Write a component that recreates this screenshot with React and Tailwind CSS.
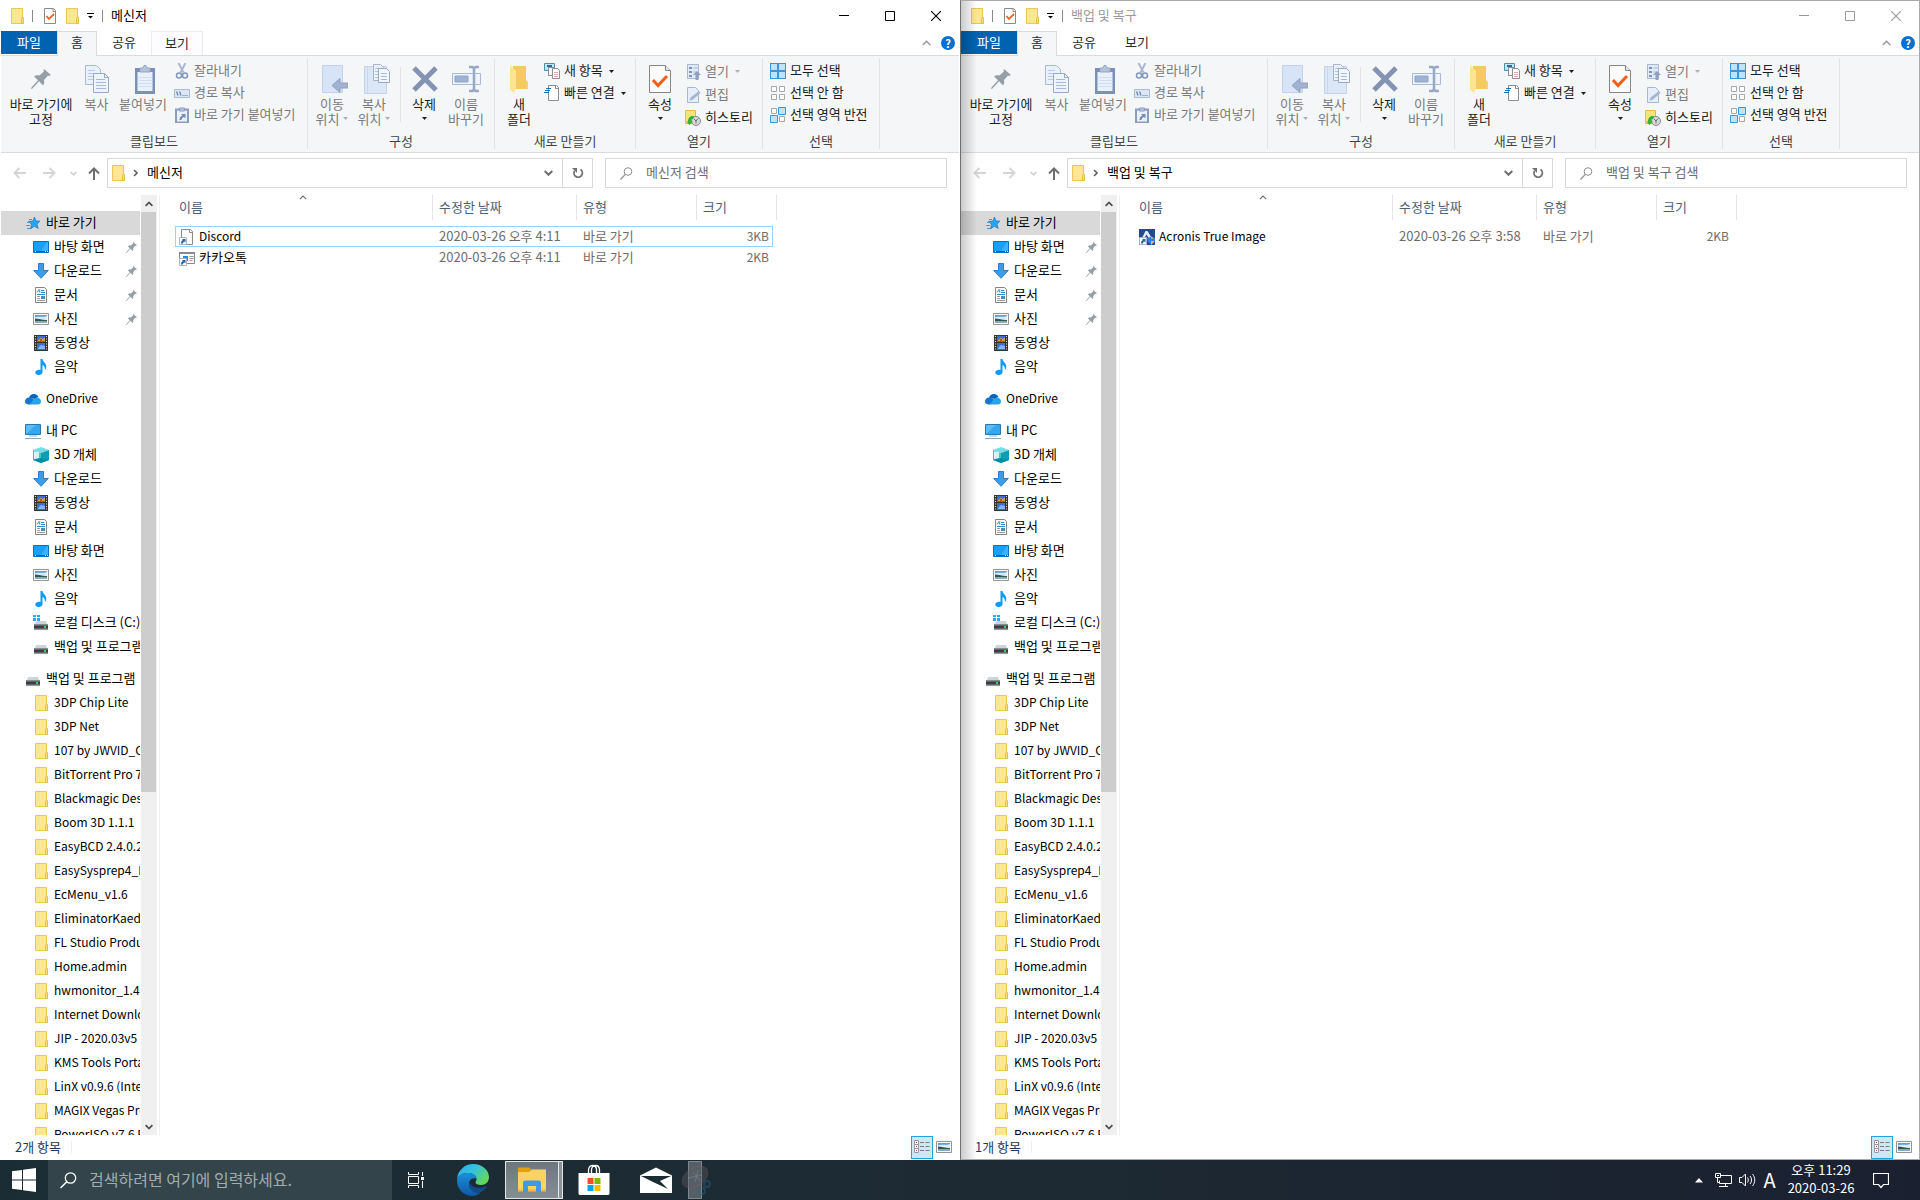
import React from "react";

/* ---------- icons ---------- */

const Svg = ({ w = 16, h = 16, className = "", children }) => (
  <svg
    width={w}
    height={h}
    viewBox={`0 0 ${w} ${h}`}
    fill="none"
    aria-hidden="true"
    className={`shrink-0 ${className}`}
  >
    {children}
  </svg>
);

const FolderIcon = ({ className }) => (
  <Svg className={className}>
    <path d="M2.5.5h11v9h1v6h-12z" fill="#ffe694" stroke="#ebc851" />
    <path d="M12.5 15.5v-5l1-1.5 1 1.5v5z" fill="#fbe08a" stroke="#e5bf44" />
  </Svg>
);

const CheckDocIcon = () => (
  <Svg>
    <path d="M2.5.5h9l2 2v13h-11z" fill="#fff" stroke="#8a8a8a" />
    <path d="M11 .5v3h3" stroke="#8a8a8a" />
    <path d="m4.5 8 2.5 3 5-5" stroke="#f0641e" strokeWidth="1.8" />
  </Svg>
);

const PinIcon = ({ size = 11 }) => (
  <svg width={size} height={size} viewBox="0 0 20 20" aria-hidden="true" className="shrink-0">
    <path
      d="M13 0l7 6-2 1-1-.4-4 4.4c.6 2 .2 4-1 5.500l-4-4.200L1.500 19.500 0 20l.4-1.500 6.600-7.200L3 7.500c1.500-1.300 3.500-1.500 5.500-1L13 2.500 12.400 1.500z"
      fill="#93a0a8"
    />
  </svg>
);

const Caret = ({ color = "#222" }) => (
  <Svg w={5} h={3}>
    <path d="M0 0h5L2.500 3z" fill={color} />
  </Svg>
);

const Chevron = ({ dir = "down", color = "#707070", w = 9, h = 6, sw = 2 }) => (
  <svg width={w} height={h} viewBox="0 0 9 6" fill="none" aria-hidden="true" className="shrink-0">
    <path d={dir === "down" ? "M.7 1l3.800 3.800L8.300 1" : "M.7 5l3.800-3.800L8.300 5"} stroke={color} strokeWidth={sw} />
  </svg>
);

const CopyIcon = () => (
  <Svg w={24} h={28}>
    <path d="M.5.500h11l4 4v15H.5z" fill="#eaf1fb" stroke="#a9b9d4" />
    <path d="M3 5.500h7M3 8.500h9M3 11.500h5M3 14.500h5" stroke="#b9c8e0" />
    <path d="M8.500 8.500h11l4 4v15h-15z" fill="#eef4fc" stroke="#97a9c8" />
    <path d="M19.500 8.500v4h4" stroke="#97a9c8" />
    <path d="M11 14.500h9M11 17.500h10M11 20.500h10M11 23.500h10" stroke="#a9b9d4" />
  </Svg>
);

const PasteIcon = () => (
  <Svg w={24} h={29}>
    <g transform="translate(4 0)">
      <path d="M0 3h20v26H0z" fill="#7b8fb8" />
      <path d="M2.500 7h15v19h-15z" fill="#e9f1fc" />
      <path d="M2.500 12.500h15M2.500 15.500h15M2.500 18.500h15M2.500 21.500h15" stroke="#d0deef" />
      <path d="M5 3h3l1-2.500h2L12 3h3v4H5z" fill="#b5c3da" stroke="#93a5c5" />
    </g>
  </Svg>
);

const ScissorsIcon = () => (
  <Svg>
    <path d="M4.500 0l5 9.500M11.500 0l-5 9.500" stroke="#a9b8d3" strokeWidth="2" />
    <circle cx="5" cy="12.500" r="2.500" stroke="#8397bd" strokeWidth="1.500" />
    <circle cx="11" cy="12.500" r="2.500" stroke="#8397bd" strokeWidth="1.500" />
  </Svg>
);

const PathIcon = () => (
  <Svg>
    <path d="M.5 4.500h15v8H.5z" fill="#dce7f6" stroke="#aabad4" />
    <path d="M2.500 6.500l1.500 4M5.500 6.500l1.500 4" stroke="#7489b3" strokeWidth="1.400" />
    <path d="M8.500 10.500h1M10.500 10.500h1M12.500 10.500h1" stroke="#5b74a5" />
  </Svg>
);

const PasteShortcutIcon = () => (
  <Svg>
    <path d="M2 2.500h12v13H2z" fill="#e9f1fc" stroke="#8a9cc0" strokeWidth="2" />
    <path d="M5.500 1h5v3h-5z" fill="#b5c3da" stroke="#8a9cc0" />
    <path d="M5.500 13c0-2.500 1-3.800 3-4.500L7 7h4.500v4.500L10 10c-1.500.5-2.500 1.500-2.500 3z" fill="#7489b3" />
  </Svg>
);

const MoveToIcon = () => (
  <Svg w={32} h={28}>
    <g transform="translate(6 0)">
      <path d="M.5.500h20v27H.5z" fill="#d7e3f6" stroke="#c3d2ea" />
      <path d="M10 20.500l8-7v4.500h8v5h-8v4.500z" fill="#a3b2d0" stroke="#8fa1c3" />
    </g>
  </Svg>
);

const CopyToIcon = () => (
  <Svg w={32} h={30}>
    <g transform="translate(6 0)">
      <path d="M.5 2.500h22v27H.5z" fill="#dbe6f6" stroke="#c3d2ea" />
      <path d="M3.500 3v26" stroke="#cbd8ec" />
      <path d="M9.500.500h7l3 3v13h-10z" fill="#eef4fc" stroke="#a3b4d0" />
      <path d="M11 4.500h4M11 7.500h4M11 10.500h3M11 13.500h3" stroke="#b4c3dc" />
      <path d="M14.500 4.500h8l3 3v11h-11z" fill="#f3f7fd" stroke="#97a9c8" />
      <path d="M17 9.500h6M17 12.500h6M17 15.500h6" stroke="#a9b9d4" />
    </g>
  </Svg>
);

const DeleteIcon = () => (
  <Svg w={28} h={26}>
    <path d="M4 2l22 22M26 2L4 24" stroke="#8394b3" strokeWidth="5" />
  </Svg>
);

const RenameIcon = () => (
  <Svg w={30} h={28}>
    <path d="M1.500 8.500h28v11h-28z" fill="#eef4fc" stroke="#a9b9d4" />
    <path d="M4 11h13v6H4z" fill="#a2b3d2" stroke="#8fa3c8" />
    <path
      d="M18 2h3.500L23 3.500 24.500 2H28M18 26h3.500l1.500-1.500 1.500 1.500H28M23 3v22"
      stroke="#97a8c8"
      strokeWidth="2.500"
    />
  </Svg>
);

const NewFolderIcon = () => (
  <Svg w={20} h={28}>
    <path d="M4 1h13v16l2 1v6H4z" fill="#f3cb62" />
    <path d="M1 1h1l5 5v17l-2 5-4-3z" fill="#ffe293" />
    <path d="M17 15l2 2v7h-2z" fill="#f5d070" />
  </Svg>
);

const NewItemIcon = () => (
  <Svg>
    <path d="M.5.500h10v7H.5z" fill="#bfe6fa" stroke="#4a90b5" />
    <path d="M3 3h5" stroke="#2d6d92" strokeWidth="2" />
    <path d="M4.500 4.500h6v8h-6z" fill="#f6f6f6" stroke="#8d8d8d" />
    <path d="M8.500 5.500h5l2 2v8h-7z" fill="#fff" stroke="#8d8d8d" />
    <path d="M10 9.500h4M10 11.500h4M10 13.500h4" stroke="#e2a6a6" />
  </Svg>
);

const EasyAccessIcon = () => (
  <Svg>
    <path d="M4.500.500h8l2 2v13h-10z" fill="#fff" stroke="#8d8d8d" />
    <path d="M11.500.500v3h3" stroke="#8d8d8d" />
    <path d="M2 3.500h5M1 5.500h5M0 7.500h5" stroke="#1c6ea8" strokeWidth="1.200" />
  </Svg>
);

const PropertiesIcon = () => (
  <Svg w={22} h={28}>
    <path d="M.5.500h16l5 5v22H.5z" fill="#fbfbfb" stroke="#868686" />
    <path d="M16.500.500v5h5" fill="#e6e6e6" stroke="#868686" />
    <path d="M4 15l5 5.500L18 11" stroke="#f0601a" strokeWidth="3" />
  </Svg>
);

const OpenIcon = () => (
  <Svg>
    <path d="M2.500.500h11v14h-11z" fill="#dfe9f7" stroke="#a5b6d2" />
    <path d="M4 3h3v2H4zM4 7h3v2H4zM4 11h3v2H4z" fill="#7f93ba" />
    <path d="M8.500 4h4M8.500 8h3" stroke="#a5b6d2" />
    <path d="M12 7l4 4h-2.500v5h-3v-5H8z" fill="#8fa1c3" />
  </Svg>
);

const EditIcon = () => (
  <Svg>
    <path d="M2.500.500h8l3 3v12h-11z" fill="#e6eef9" stroke="#a5b6d2" />
    <path d="M4.500 14l1-3.500L14 4l1.500 2L8 12.500z" fill="#a5b6d2" />
  </Svg>
);

const HistoryIcon = () => (
  <Svg>
    <path d="M.5.500h10v13H.5z" fill="#ffe07a" stroke="#e3bb42" />
    <circle cx="11" cy="11" r="4.500" fill="#d9d9d9" stroke="#8a8a8a" />
    <path d="M9 9l2 2 2-2.500M11 11v2.500" stroke="#6a6a6a" />
    <path d="M3 11.500c0-4 2.500-6 6-5.500l-.5 2.500c-1.500 0-2.500 1-2.500 3h1.800L4.500 15 1.500 11.500z" fill="#2fb530" />
  </Svg>
);

const SelectAllIcon = () => (
  <Svg>
    <path d="M0 0h16v16H0z" fill="#3895e0" />
    <path d="M1 1h6v6H1zM9 1h6v6H9zM1 9h6v6H1zM9 9h6v6H9z" fill="#bfe3fb" />
  </Svg>
);

const SelectNoneIcon = () => (
  <Svg>
    <path
      d="M1.500 1.500h5v5h-5zM9.500 1.500h5v5h-5zM1.500 9.500h5v5h-5zM9.500 9.500h5v5h-5z"
      fill="#fff"
      stroke="#a8a8a8"
    />
  </Svg>
);

const InvertIcon = () => (
  <Svg>
    <path d="M1.500 1.500h5v5h-5zM9.500 9.500h5v5h-5z" fill="#fff" stroke="#a8a8a8" />
    <path d="M8.500.500h7v7h-7zM.5 8.500h7v7h-7z" fill="#bfe3fb" stroke="#3895e0" />
  </Svg>
);

const StarIcon = () => (
  <Svg>
    <path
      d="M9.500 2l1.500 4 4 .2-3 2.800 1.200 4.500-3.900-2.300-3.800 2.800 1-4.800L3.500 6.500 8 6z"
      fill="#2ba4f0"
      stroke="#1479c9"
      strokeWidth=".7"
    />
    <path d="M2 7.500h3M1 10.500h4M2 13.500h3M4 4.500h3" stroke="#4a97d0" />
  </Svg>
);

const DesktopIcon = () => (
  <Svg>
    <path d="M.5 2.500h15v11H.5z" fill="#17a0fb" stroke="#0a72bd" />
    <path d="M8 12l6-9h1v9z" fill="#3db1ff" />
    <path d="M1 12.500h14" stroke="#0b5e9c" />
    <path d="M2 12.500h1M12 12.500h1M14 12.500h1" stroke="#fff" />
  </Svg>
);

const DownloadIcon = () => (
  <Svg>
    <path d="M5.500.500h5v7h4.800L8 15.300.7 7.500h4.800z" fill="#3d9be9" stroke="#2a7fcb" />
  </Svg>
);

const DocumentIcon = () => (
  <Svg>
    <path d="M2.500.500h9l2 2v13h-11z" fill="#fff" stroke="#858585" />
    <path d="M4 5.500l2-3 1 3M8 3.500h3M4 7.500h8M8 5.500h4" stroke="#2a8fd0" />
    <path d="M4 9.500h3M4 11.500h3M4 13.500h8" stroke="#9a9a9a" />
    <path d="M8 9h4v3H8z" fill="#3f93b0" />
  </Svg>
);

const PictureIcon = () => (
  <Svg>
    <path d="M.5 2.500h15v11H.5z" fill="#fff" stroke="#949494" />
    <path d="M2 4h12v8H2z" fill="#5a9be6" />
    <path d="M2 6.500c3-1.500 7 0 12-1.500v4H2z" fill="#d9eaf8" />
    <path d="M2 7.500c4 .3 6 1.500 12 1.500v1.500H2z" fill="#2f5a4a" />
    <path d="M2 10h12v2H2z" fill="#86a9bd" />
  </Svg>
);

const VideoIcon = () => (
  <Svg>
    <path d="M1 0h14v16H1z" fill="#333" />
    <path d="M4 1h8v6H4zM4 8h8v7H4z" fill="#3f6fd1" />
    <path d="M5 5l3-2 2 1 2-2v4H5z" fill="#c8a52a" />
    <path d="M7 4h2v2H7z" fill="#d8452c" />
    <path d="M5 13l3-3 4 1v3H5z" fill="#86b4f0" />
    <path d="M2.500 1v15M13.500 1v15" stroke="#e8e8e8" strokeDasharray="1 1.500" />
  </Svg>
);

const MusicIcon = () => (
  <Svg>
    <path
      d="M7.500 0h2c.3 3 3.800 4 3.800 7.500 0 1.500-.5 2.700-1.500 3.700.5-2.700-.3-4.200-2.300-5.200v7c0 2-1.700 3-3.700 3C3.500 16 2.300 15 2.300 13.500c0-2 2.700-3.200 5.200-2.500z"
      fill="#0d9cf5"
    />
  </Svg>
);

const CloudIcon = () => (
  <Svg>
    <path d="M4 7c.5-2.500 2.500-4 5-4 2 0 3.500 1 4.300 2.800L10 8z" fill="#0b62b8" />
    <path d="M0 10.500C0 8.500 1.500 6.500 4 6.500c1.500 0 2.500.5 4 1.500L14 12l-10 1.500c-2.500 0-4-1.200-4-3z" fill="#1177d1" />
    <path d="M4 13.500L9.500 8c1-1.300 3-1.800 4.300-1 1.500.7 2.200 2 2.200 3.500 0 1.800-1.300 3-3 3z" fill="#28a2ea" />
  </Svg>
);

const PcIcon = () => (
  <Svg>
    <path d="M.5 1.500h15v10H.5z" fill="#5cbdf7" stroke="#2878ab" />
    <path d="M1 11l10-9h4v9z" fill="#33a6f0" />
    <path d="M4 13h8" stroke="#9fb3c4" />
    <path d="M0 15.500h16" stroke="#93a3ba" />
  </Svg>
);

const Cube3dIcon = () => (
  <Svg>
    <path d="M0 3l8-3 8 3-8 3z" fill="#7adbe3" />
    <path d="M0 3l8 3v10l-8-3z" fill="#3ec6d6" />
    <path d="M16 3L8 6v10l8-3z" fill="#0f9fb5" />
    <path d="M1 4.500L6 5v6l-5 1z" fill="#d3f3f5" />
    <path d="M8 11l8 2-8 3-8-3z" fill="#0b8aa3" />
  </Svg>
);

const DriveIcon = ({ system }) => (
  <Svg>
    <path d="M3.500 6h9l2.500 4H1z" fill="#d0d4d8" />
    <path d="M1 9.500h14v5H1z" fill="#3a3d40" />
    <path d="M1 9.500h14v1H1zM1 13.500h14v1H1z" fill="#8b9095" />
    <path d="M11 11h2v2h-2z" fill="#3bdc4a" />
    {system && (
      <>
        <path d="M0 0h7v6H0z" fill="#fff" />
        <path d="M0 0h3v2H0zM4 0h3v2H4zM0 3h3v3H0zM4 3h3v3H4z" fill="#0cb4f2" />
      </>
    )}
  </Svg>
);

const ShortcutBadge = () => (
  <>
    <path d="M.5 8.500h7v7h-7z" fill="#fff" stroke="#a9b4c4" />
    <path d="M2 14.500c0-2 .7-3 2-3.500l-1-1h3.500v3.500l-1-1c-1 .2-1.500 1-1.500 2z" fill="#2b5fa8" />
  </>
);

const FileShortcutIcon = () => (
  <Svg>
    <path d="M2.500.500h9l2 2v13h-11z" fill="#fafafa" stroke="#8a8a8a" />
    <path d="M10.500.500v3h3" stroke="#8a8a8a" />
    <ShortcutBadge />
  </Svg>
);

const AppShortcutIcon = () => (
  <Svg>
    <path d="M.5 2.500h15v11H.5z" fill="#fafafa" stroke="#8a8a8a" />
    <path d="M0 3h16" stroke="#8a8a8a" strokeWidth="2" />
    <path d="M4 6h5v5H4z" fill="#1d8be0" />
    <path d="M10.500 6.500h4M10.500 8.500h4M10.500 10.500h3" stroke="#9a9a9a" />
    <ShortcutBadge />
  </Svg>
);

const AcronisIcon = () => (
  <Svg>
    <path d="M0 0h16v16H0z" fill="#25488f" />
    <path d="M3 9l3.500-7h2L13 9.500h-3L7.500 5.500 5.500 9z" fill="#e6eefb" />
    <path d="M8 9.500l4-2 4 2v3.500l-3.500 3L9 13z" fill="#2f7fe0" />
    <path d="M12 7.500l3.500 2H12zM12 12h3.500L12 16z" fill="#f5c32c" />
    <ShortcutBadge />
  </Svg>
);

/* ---------- data ---------- */

const quickAccess = [
  { name: "바탕 화면", Icon: DesktopIcon, pinned: true },
  { name: "다운로드", Icon: DownloadIcon, pinned: true },
  { name: "문서", Icon: DocumentIcon, pinned: true },
  { name: "사진", Icon: PictureIcon, pinned: true },
  { name: "동영상", Icon: VideoIcon },
  { name: "음악", Icon: MusicIcon },
];

const myPc = [
  { name: "3D 개체", Icon: Cube3dIcon },
  { name: "다운로드", Icon: DownloadIcon },
  { name: "동영상", Icon: VideoIcon },
  { name: "문서", Icon: DocumentIcon },
  { name: "바탕 화면", Icon: DesktopIcon },
  { name: "사진", Icon: PictureIcon },
  { name: "음악", Icon: MusicIcon },
  { name: "로컬 디스크 (C:)", Icon: () => <DriveIcon system /> },
  { name: "백업 및 프로그램", Icon: DriveIcon },
];

const folders = [
  "3DP Chip Lite",
  "3DP Net",
  "107 by JWVID_Ch",
  "BitTorrent Pro 7.10",
  "Blackmagic Design",
  "Boom 3D 1.1.1",
  "EasyBCD 2.4.0.237",
  "EasySysprep4_Kor",
  "EcMenu_v1.6",
  "EliminatorKaede",
  "FL Studio Producer",
  "Home.admin",
  "hwmonitor_1.41",
  "Internet Download",
  "JIP - 2020.03v5",
  "KMS Tools Portable",
  "LinX v0.9.6 (Intel)",
  "MAGIX Vegas Pro",
  "PowerISO v7.6 Pro",
].map((name) => ({ name, Icon: FolderIcon, latin: true }));

const tree = [
  { name: "바로 가기", Icon: StarIcon, selected: true, items: quickAccess },
  { name: "OneDrive", Icon: CloudIcon, latin: true, items: [] },
  { name: "내 PC", Icon: PcIcon, items: myPc },
  { name: "백업 및 프로그램", Icon: DriveIcon, items: folders },
];

const messengerFiles = [
  { name: "Discord", Icon: FileShortcutIcon, date: "2020-03-26 오후 4:11", size: "3KB", latin: true, focused: true },
  { name: "카카오톡", Icon: AppShortcutIcon, date: "2020-03-26 오후 4:11", size: "2KB" },
];

const backupFiles = [
  { name: "Acronis True Image", Icon: AcronisIcon, date: "2020-03-26 오후 3:58", size: "2KB", latin: true },
];

/* ---------- window parts ---------- */

const TitleBar = ({ title, active }) => (
  <header className={`flex h-[30px] shrink-0 items-center ${active ? "text-black" : "text-[#999999]"}`}>
    <div className="flex flex-1 items-center pl-2">
      <FolderIcon />
      <span className="ml-[7px] h-3 w-px bg-[#8a8a8a]" />
      <button aria-label="속성" className="ml-[9px]">
        <CheckDocIcon />
      </button>
      <button aria-label="새 폴더" className="ml-[6px]">
        <FolderIcon />
      </button>
      <button aria-label="빠른 실행 도구 모음 사용자 지정" className="ml-[7px]">
        <Svg w={7} h={6}>
          <path d="M0 .5h7" stroke="#000" />
          <path d="M1 3h5L3.500 5.500z" fill="#000" />
        </Svg>
      </button>
      <span className="ml-[8px] h-3 w-px bg-[#8a8a8a]" />
      <h1 className="ml-[8px] pb-0.5 whitespace-nowrap">{title}</h1>
    </div>
    <button aria-label="최소화" className="flex h-full w-[46px] items-center justify-center">
      <Svg w={10} h={10}>
        <path d="M0 4.500h10" stroke="currentColor" />
      </Svg>
    </button>
    <button aria-label="최대화" className="flex h-full w-[46px] items-center justify-center">
      <Svg w={10} h={10}>
        <path d="M.5.500h9v9h-9z" stroke="currentColor" />
      </Svg>
    </button>
    <button aria-label="닫기" className="flex h-full w-[46px] items-center justify-center">
      <Svg w={10} h={10}>
        <path d="M0 0l10 10M10 0L0 10" stroke="currentColor" strokeWidth="1.100" />
      </Svg>
    </button>
  </header>
);

const TabBar = ({ active }) => (
  <nav className="flex h-6 shrink-0 items-start text-[#2b2b2b]">
    <button className="h-[23px] w-14 bg-[#0063b1] pb-0.5 text-white">파일</button>
    <button className="relative z-10 h-[25px] w-10 border border-b-0 border-[#dadbdc] bg-[#f5f6f7] pb-1">홈</button>
    <button className="h-6 w-[54px] pb-0.5">공유</button>
    <button className={`h-6 w-[52px] pb-0.5 ${active ? "border border-b-0 border-[#ebecec] bg-[#fdfdff]" : ""}`}>
      보기
    </button>
    <button aria-label="리본 메뉴 최소화" className="ml-auto flex h-6 w-6 items-center justify-center">
      <Chevron dir="up" color="#9a9a9a" sw={1.5} />
    </button>
    <button aria-label="도움말" className="mr-1 ml-[3px] flex h-6 w-[14px] items-center justify-center">
      <span className="flex h-[14px] w-[14px] items-center justify-center rounded-full bg-[#0a70cf] text-[11px] font-bold text-white">
        ?
      </span>
    </button>
  </nav>
);

const BigButton = ({ icon, lines, width, disabled, caret }) => (
  <button
    disabled={disabled}
    className={`flex shrink-0 flex-col items-center pt-[7px] leading-[15px] whitespace-nowrap ${width} ${
      disabled ? "text-[#7a7a7a]" : "text-[#1e1e1e]"
    }`}
  >
    <span className="mb-[3px] flex h-7 items-center justify-center">{icon}</span>
    <span>{lines[0]}</span>
    <span className="flex h-[15px] items-center gap-1">
      {lines[1]}
      {caret && <Caret color={disabled ? "#b0b0b0" : "#1e1e1e"} />}
    </span>
  </button>
);

const SmallButton = ({ icon, label, disabled, caret, tall }) => (
  <button
    disabled={disabled}
    className={`flex items-center gap-1 whitespace-nowrap ${tall ? "h-[23px]" : "h-[22px]"} ${
      disabled ? "text-[#7a7a7a]" : "text-[#1e1e1e]"
    }`}
  >
    {icon}
    <span className="pb-0.5">{label}</span>
    {caret && (
      <span className="ml-[2px]">
        <Caret color={disabled ? "#b0b0b0" : "#1e1e1e"} />
      </span>
    )}
  </button>
);

const RibbonGroup = ({ label, width, children }) => (
  <section aria-label={label} className={`flex shrink-0 flex-col border-r border-[#e2e3e4] ${width}`}>
    <div className="flex flex-1 items-start">{children}</div>
    <p className="h-4 text-center leading-4 text-[#444444]">{label}</p>
  </section>
);

const Ribbon = () => (
  <div className="flex h-[98px] shrink-0 overflow-hidden border-y border-[#dadbdc] bg-[#f5f6f7] pt-0.5 pb-[3px]">
    <RibbonGroup label="클립보드" width="w-[307px]">
      <BigButton icon={<PinIcon size={20} />} lines={["바로 가기에", "고정"]} width="w-20" />
      <BigButton icon={<CopyIcon />} lines={["복사"]} width="w-[31px]" disabled />
      <BigButton icon={<PasteIcon />} lines={["붙여넣기"]} width="w-[62px]" disabled />
      <div className="pt-0.5">
        <SmallButton icon={<ScissorsIcon />} label="잘라내기" disabled />
        <SmallButton icon={<PathIcon />} label="경로 복사" disabled />
        <SmallButton icon={<PasteShortcutIcon />} label="바로 가기 붙여넣기" disabled />
      </div>
    </RibbonGroup>
    <RibbonGroup label="구성" width="w-[187px]">
      <span className="w-[3px]" />
      <BigButton icon={<MoveToIcon />} lines={["이동", "위치"]} width="w-[42px]" disabled caret />
      <BigButton icon={<CopyToIcon />} lines={["복사", "위치"]} width="w-[42px]" disabled caret />
      <span className="mt-[9px] mr-0.5 ml-[5px] h-[55px] w-px bg-[#e2e3e4]" />
      <BigButton icon={<DeleteIcon />} lines={["삭제"]} width="w-[42px]" caret />
      <BigButton icon={<RenameIcon />} lines={["이름", "바꾸기"]} width="w-[42px]" disabled />
    </RibbonGroup>
    <RibbonGroup label="새로 만들기" width="w-[141px]">
      <BigButton icon={<NewFolderIcon />} lines={["새", "폴더"]} width="w-12" />
      <div className="pt-0.5 pl-px">
        <SmallButton icon={<NewItemIcon />} label="새 항목" caret />
        <SmallButton icon={<EasyAccessIcon />} label="빠른 연결" caret />
      </div>
    </RibbonGroup>
    <RibbonGroup label="열기" width="w-[127px]">
      <BigButton icon={<PropertiesIcon />} lines={["속성"]} width="w-12" caret />
      <div className="pt-0.5 pl-px">
        <SmallButton icon={<OpenIcon />} label="열기" disabled caret tall />
        <SmallButton icon={<EditIcon />} label="편집" disabled tall />
        <SmallButton icon={<HistoryIcon />} label="히스토리" tall />
      </div>
    </RibbonGroup>
    <RibbonGroup label="선택" width="w-[117px]">
      <div className="pt-0.5 pl-[7px]">
        <SmallButton icon={<SelectAllIcon />} label="모두 선택" />
        <SmallButton icon={<SelectNoneIcon />} label="선택 안 함" />
        <SmallButton icon={<InvertIcon />} label="선택 영역 반전" />
      </div>
    </RibbonGroup>
  </div>
);

const AddressBar = ({ title }) => (
  <div className="flex h-[42px] shrink-0 items-start pt-[5px] pr-3">
    <div className="flex h-[30px] w-[106px] shrink-0 items-center pl-3">
      <button aria-label="뒤로" disabled>
        <Svg w={13} h={12}>
          <path d="M13 6H1.500M6.500 1l-5 5 5 5" stroke="#d5d5d5" strokeWidth="2" />
        </Svg>
      </button>
      <button aria-label="앞으로" disabled className="ml-[17px]">
        <Svg w={13} h={12}>
          <path d="M0 6h11.500M6.500 1l5 5-5 5" stroke="#d5d5d5" strokeWidth="2" />
        </Svg>
      </button>
      <button aria-label="최근 위치" className="ml-[14px]">
        <Chevron color="#d0d0d0" w={7} h={5} />
      </button>
      <button aria-label="위로" className="ml-[11px]">
        <Svg w={12} h={13}>
          <path d="M6 13V1.500M1 6.500l5-5 5 5" stroke="#707070" strokeWidth="2" />
        </Svg>
      </button>
    </div>
    <div className="flex h-[30px] min-w-0 flex-1 border border-[#d9d9d9] bg-white">
      <div className="flex flex-1 items-center pl-[2px]">
        <FolderIcon />
        <Svg w={5} h={8} className="ml-[7px]">
          <path d="M1 1l3 3-3 3" stroke="#606060" strokeWidth="1.600" />
        </Svg>
        <span className="ml-[9px] pb-0.5">{title}</span>
      </div>
      <button aria-label="이전 위치" className="flex w-7 items-center justify-center">
        <Chevron color="#707070" />
      </button>
      <button aria-label="새로 고침" className="flex w-[30px] items-center justify-center border-l border-[#d9d9d9]">
        <Svg w={12} h={12}>
          <path d="M8.500 2.500A4.200 4.200 0 1 1 2.500 4" stroke="#707070" strokeWidth="1.800" />
          <path d="M0 1h5v5z" fill="#707070" />
        </Svg>
      </button>
    </div>
    <label className="ml-3 flex h-[30px] w-[342px] shrink-0 items-center border border-[#d9d9d9] bg-white pl-[14px]">
      <Svg w={13} h={13}>
        <circle cx="8" cy="4.500" r="3.800" stroke="#8d8d8d" />
        <path d="M5.300 7.300L.5 12.500" stroke="#8d8d8d" strokeWidth="1.200" />
      </Svg>
      <input
        type="search"
        aria-label={`${title} 검색`}
        placeholder={`${title} 검색`}
        className="ml-[13px] min-w-0 flex-1 bg-transparent pb-0.5 outline-none placeholder:text-[#6d6d6d]"
      />
    </label>
  </div>
);

const TreeRow = ({ name, Icon, selected, pinned, child, latin }) => (
  <a
    href="#"
    className={`flex h-6 items-center whitespace-nowrap ${child ? "pl-8" : "pl-6"} ${selected ? "bg-[#d9d9d9]" : ""}`}
  >
    <Icon />
    <span className={`ml-[5px] pb-0.5 ${latin ? "text-xs" : ""}`}>{name}</span>
    {pinned && (
      <span className="mr-[3px] ml-auto">
        <PinIcon />
      </span>
    )}
  </a>
);

const NavPane = () => (
  <aside className="flex w-[159px] shrink-0 border-r border-[#f0f0f0]">
    <div className="flex min-w-0 flex-1 flex-col gap-2 overflow-hidden pt-4">
      {tree.map((group) => (
        <div key={group.name} className="shrink-0">
          <TreeRow {...group} />
          {group.items.map((item) => (
            <TreeRow key={item.name} {...item} child />
          ))}
        </div>
      ))}
    </div>
    <div className="mr-[2px] ml-px flex w-4 flex-col bg-[#f0f0f0]">
      <button aria-label="위로 스크롤" className="flex h-[17px] items-center justify-center">
        <Chevron dir="up" color="#505050" w={8} h={6} />
      </button>
      <div className="min-h-0 flex-1">
        <div className="h-[64%] w-[15px] bg-[#cdcdcd]" />
      </div>
      <button aria-label="아래로 스크롤" className="flex h-[17px] items-center justify-center">
        <Chevron color="#505050" w={8} h={6} />
      </button>
    </div>
  </aside>
);

const headCell = "relative h-[25px] border-r border-[#e5e5e5] p-0 pb-0.5 text-left font-normal";

const FileTable = ({ files }) => (
  <div className="min-w-0 flex-1 overflow-hidden pl-[15px]">
    <table className="w-[602px] table-fixed border-separate border-spacing-0 whitespace-nowrap">
      <thead className="text-[#4c607a]">
        <tr>
          <th className={`w-[258px] pl-1 ${headCell}`}>
            이름
            <span className="absolute top-0 left-[124px]">
              <Chevron dir="up" color="#707070" w={8} h={5} sw={1.3} />
            </span>
          </th>
          <th className={`w-[144px] ${headCell}`}>
            <span className="pl-1.5">수정한 날짜</span>
          </th>
          <th className={`w-[120px] ${headCell}`}>
            <span className="pl-1.5">유형</span>
          </th>
          <th className="w-[76px] p-0 pb-0.5 text-left font-normal">
            <span className="pl-1.5">크기</span>
          </th>
          <td className="w-1 border-r border-[#e5e5e5] p-0" />
        </tr>
      </thead>
      <tbody className="text-[#6d6d6d] before:block before:h-[6px] before:content-['']">
        {files.map(({ name, Icon, date, size, focused, latin }) => {
          const line = focused ? "border-[#99d1ff]" : "border-transparent";
          return (
            <tr key={name} className="h-[21px] leading-[17px]">
              <td className={`border-y border-l p-0 pl-[3px] text-black ${line}`}>
                <a href="#" className="flex items-center gap-1">
                  <Icon />
                  <span className={`pb-0.5 ${latin ? "text-xs leading-[17px]" : ""}`}>{name}</span>
                </a>
              </td>
              <td className={`border-y p-0 pb-0.5 pl-1.5 ${line}`}>{date}</td>
              <td className={`border-y p-0 pb-0.5 pl-1.5 ${line}`}>바로 가기</td>
              <td className={`border-y border-r p-0 pr-[3px] pb-0.5 text-right text-xs leading-[17px] ${line}`}>{size}</td>
            </tr>
          );
        })}
      </tbody>
    </table>
  </div>
);

const StatusBar = ({ count }) => (
  <footer className="flex h-6 shrink-0 items-center text-[#1e395b]">
    <span className="pl-[14px]">{count}개 항목</span>
    <span className="ml-[10px] h-3 w-px bg-[#f0f0f0]" />
    <button
      aria-label="자세히"
      className="ml-auto flex h-[23px] w-[22px] items-center justify-center border border-[#26a0da] bg-[#cbe8f6]"
    >
      <Svg w={16} h={14}>
        <path d="M.5.500h4v12h-4zM.5 4.500h4M.5 8.500h4" fill="#fff" stroke="#9a9a9a" />
        <path d="M2 2.500h1M2 6.500h1M2 10.500h1" stroke="#9c3d3d" />
        <path d="M6 2.500h4M11.500 2.500h4M6 6.500h4M11.500 6.500h4M6 10.500h4M11.500 10.500h4" stroke="#7b7b7b" />
      </Svg>
    </button>
    <button aria-label="큰 아이콘" className="mr-[7px] ml-[3px]">
      <PictureIcon />
    </button>
  </footer>
);

const ExplorerWindow = ({ title, files, active }) => (
  <main
    className={`relative flex min-w-0 flex-1 flex-col border bg-white ${
      active ? "border-white" : "border-[#aaaaaa] border-l-[#707070]"
    }`}
  >
    <TitleBar title={title} active={active} />
    <TabBar active={active} />
    <Ribbon />
    <AddressBar title={title} />
    <div className="flex min-h-0 flex-1">
      <NavPane />
      <FileTable files={files} />
    </div>
    <StatusBar count={files.length} />
    {/* shadow cast by the focused window */}
    {!active && (
      <div className="pointer-events-none absolute inset-y-0 left-0 w-4 bg-linear-to-r from-black/20 to-transparent" />
    )}
  </main>
);

/* ---------- taskbar ---------- */

const EdgeIcon = () => (
  <svg width="32" height="32" viewBox="0 0 32 32" aria-hidden="true">
    <defs>
      <linearGradient id="edgeTop" x1="0" y1="0" x2="1" y2=".6">
        <stop offset="0" stopColor="#2ba8e8" />
        <stop offset=".5" stopColor="#35c1e0" />
        <stop offset="1" stopColor="#62d85a" />
      </linearGradient>
      <linearGradient id="edgeLow" x1="0" y1="0" x2="0" y2="1">
        <stop offset="0" stopColor="#1b8fdc" />
        <stop offset="1" stopColor="#0c59a4" />
      </linearGradient>
    </defs>
    <path
      d="M0 15C1 6 8 0 16 0c9 0 16 6 16 13 0 5-3.500 8-8 8-3 0-5.500-1-5.500-2.500 0-1 1-1.500 1-3.500C19.500 11.500 16 9 11 9 6 9 2 11 0 15z"
      fill="url(#edgeTop)"
    />
    <path
      d="M0 15c2-4 6-6 11-6 5 0 8.500 2.500 8.500 6-1-1.500-7-1-7.500 4-.5 6 5 10 11 10-2 2-5 3-7.500 3C6.500 32 0 25 0 17z"
      fill="url(#edgeLow)"
    />
    <path d="M12.500 18c-2 6 3 11 10 11 3-1.500 5.500-3.500 7-6 .4-.8-.3-1.200-1-.8-5 2.800-14 2.300-16-4.200z" fill="#114a8b" />
  </svg>
);

const ExplorerIcon = () => (
  <Svg w={30} h={26}>
    <path d="M1 2c0-1 .5-1.500 1.500-1.500H12l2 1.500-2 3H1z" fill="#e0a010" />
    <path d="M1 5h11l2.500-2.500H29V24H1z" fill="#fdd264" />
    <path d="M1 22h28v2.500H1z" fill="#f3bd46" />
    <path d="M6 25V16c0-1.500 1-2.500 2.500-2.500h13c1.500 0 2.500 1 2.500 2.500v9h-5v-6h-8v6z" fill="#3e9ae2" />
  </Svg>
);

const StoreIcon = () => (
  <Svg w={32} h={32}>
    <path d="M10.500 9V6c0-6 8-6 8 0v3M13.500 9V6c0-6 8-6 8 0v3" stroke="#fff" strokeWidth="1.300" />
    <path d="M.5 9h31v21l-1 1h-29l-1-1z" fill="#fff" />
    <path d="M9.500 14h6v6h-6z" fill="#f25022" />
    <path d="M16.500 14h6v6h-6z" fill="#7fba00" />
    <path d="M9.500 21h6v6h-6z" fill="#00a4ef" />
    <path d="M16.500 21h6v6h-6z" fill="#ffb900" />
  </Svg>
);

const MailIcon = () => (
  <Svg w={32} h={26}>
    <path d="M0 8.500L16 .5l16 8V26H0z" fill="#fff" />
    <path d="M1 9h30l-11 5 8 8-16-7.500z" fill="#1c2c34" />
  </Svg>
);

const Taskbar = () => (
  <footer className="flex h-10 shrink-0 items-center bg-linear-to-r from-[#1b2d34] via-[#1d2a33] to-[#1a2030] text-white">
    <button aria-label="시작" className="flex h-full w-12 items-center justify-center">
      <Svg w={24} h={24}>
        <path
          d="M0 3.300L10 2v9.500H0zM11 1.800L24 0v11.500H11zM0 12.500h10V22L0 20.700zM11 12.500h13V24l-13-1.800z"
          fill="#fff"
        />
      </Svg>
    </button>
    <label className="flex h-full w-[344px] items-center bg-[#33444b] pl-3">
      <Svg w={17} h={17}>
        <circle cx="10.500" cy="6" r="5.200" stroke="#fff" strokeWidth="1.300" />
        <path d="M6.800 9.800L.5 16" stroke="#fff" strokeWidth="1.500" />
      </Svg>
      <input
        type="search"
        aria-label="검색"
        placeholder="검색하려면 여기에 입력하세요."
        className="ml-3 min-w-0 flex-1 bg-transparent pb-0.5 text-base outline-none placeholder:text-[#a3abae]"
      />
    </label>
    <button aria-label="작업 보기" className="flex h-full w-12 items-center justify-center">
      <Svg w={16} h={16}>
        <path d="M.5 0v2.500h10V0M.5 16v-2.500h10V16M.5 4.500h10v7H.5zM14.500 0v4M14.500 9v7" stroke="#fff" />
        <path d="M13 5h3v3h-3z" fill="#fff" />
      </Svg>
    </button>
    <button aria-label="Microsoft Edge" className="ml-[17px]">
      <EdgeIcon />
    </button>
    <button
      aria-label="파일 탐색기"
      className="ml-4 flex h-[38px] w-[54px] items-center justify-center border border-[#e4e6e7] bg-linear-to-b from-[#6c777d] to-[#858e93]"
    >
      <ExplorerIcon />
    </button>
    <span className="h-[38px] w-1 border border-l-0 border-[#e4e6e7] bg-[#8a9398]" />
    <button aria-label="Microsoft Store" className="ml-[15px]">
      <StoreIcon />
    </button>
    <button aria-label="메일" className="ml-[30px]">
      <MailIcon />
    </button>
    <button aria-label="캡처 도구" className="relative ml-4 h-[38px] w-[14px] border border-[#7e888c] bg-[#535f65]">
      <svg
        width="30"
        height="32"
        viewBox="0 0 30 32"
        fill="none"
        aria-hidden="true"
        className="absolute top-[3px] -left-2 max-w-none opacity-40"
      >
        <ellipse cx="14" cy="12" rx="14" ry="9" transform="rotate(-32 14 12)" fill="#5a5f66" stroke="#a0555a" />
        <path d="M12 7l7 9M7 13l14-3M17 5l-3 12" stroke="#a3a9ad" strokeWidth=".8" />
        <circle cx="21" cy="26" r="3" stroke="#2a6c8c" strokeWidth="2" />
        <circle cx="26" cy="19" r="3" stroke="#2a6c8c" strokeWidth="2" />
      </svg>
    </button>

    <div className="ml-auto flex h-full items-center">
      <button aria-label="숨겨진 아이콘 표시" className="mr-3">
        <Svg w={8} h={5}>
          <path d="M0 4.500L4 0l4 4.500z" fill="#fff" />
        </Svg>
      </button>
      <button aria-label="네트워크">
        <Svg w={17} h={16}>
          <path d="M5.500 3.500h11v8h-12v-3M4 14.500h9M10.500 12v2M.5 1.500h5v4h-5zM2.500 5.500v5h2" stroke="#fff" />
          <path d="M2 3.500h2" stroke="#fff" />
        </Svg>
      </button>
      <button aria-label="볼륨" className="ml-[7px]">
        <Svg w={17} h={16}>
          <path d="M.5 5.500h2.500L6.500 2v12L3 10.500H.5z" stroke="#fff" />
          <path d="M8.500 5.500c1 1.500 1 3.500 0 5M11 4c2 2.500 2 5.500 0 8M13.500 2c3 3.500 3 8.500 0 12" stroke="#fff" />
        </Svg>
      </button>
      <button aria-label="입력 표시기" className="ml-[6px] w-[15px] text-center text-xl">
        A
      </button>
      <time
        dateTime="2020-03-26T23:29"
        className="ml-[10px] w-[68px] pb-0.5 text-center leading-[18px] whitespace-nowrap"
      >
        오후 11:29
        <br />
        2020-03-26
      </time>
      <button aria-label="알림 센터" className="mr-[31px] ml-[18px]">
        <Svg w={16} h={17}>
          <path d="M.5 1.500h15v11h-5L8 15.500l-2.500-3h-5z" stroke="#fff" strokeWidth="1.200" />
        </Svg>
      </button>
    </div>
  </footer>
);

export default function App() {
  return (
    <div className="flex h-screen flex-col overflow-hidden bg-[#1b2d34] font-['Noto_Sans_CJK_KR',sans-serif] text-[13px] text-black">
      <div className="flex min-h-0 flex-1">
        <ExplorerWindow title="메신저" files={messengerFiles} active />
        <ExplorerWindow title="백업 및 복구" files={backupFiles} />
      </div>
      <Taskbar />
    </div>
  );
}
